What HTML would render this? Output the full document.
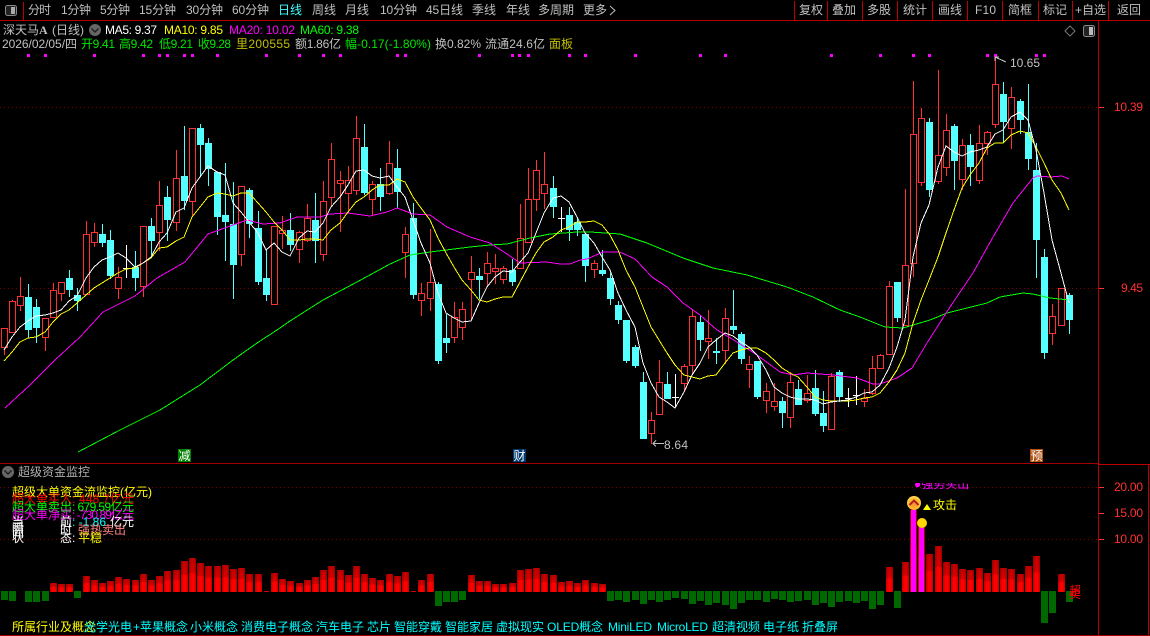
<!DOCTYPE html>
<html><head><meta charset="utf-8"><style>
html,body{margin:0;padding:0;background:#000;width:1150px;height:636px;overflow:hidden}
svg{display:block}
text{font-family:"Liberation Sans","WenQuanYi Zen Hei","Noto Sans CJK SC",sans-serif;font-size:12px;fill:#c0c0c0}
.g{fill:#00e600}.y{fill:#ffff00}.dy{fill:#c0c000}.m{fill:#ff00ff}.w{fill:#fff}.r{fill:#ff3232}.c{fill:#00ffff}
.ma{fill:none;stroke-width:1;shape-rendering:crispEdges}
</style></head><body>
<svg width="1150" height="636" viewBox="0 0 1150 636" xmlns="http://www.w3.org/2000/svg">
<defs>
<linearGradient id="rg" x1="0" x2="1" y1="0" y2="0"><stop offset="0" stop-color="#c00000"/><stop offset=".35" stop-color="#ff0000"/><stop offset=".7" stop-color="#ff0000"/><stop offset="1" stop-color="#c00000"/></linearGradient>
<linearGradient id="vg" x1="0" x2="0" y1="0" y2="1"><stop offset="0" stop-color="#000" stop-opacity=".25"/><stop offset=".45" stop-color="#000" stop-opacity=".15"/><stop offset=".46" stop-color="#000" stop-opacity="0"/><stop offset="1" stop-color="#000" stop-opacity="0"/></linearGradient>
<radialGradient id="gold" cx=".5" cy=".6" r=".6"><stop offset="0" stop-color="#ff9030"/><stop offset=".7" stop-color="#ffc030"/><stop offset="1" stop-color="#ffe060"/></radialGradient>
<clipPath id="cl"><rect x="900" y="483" width="90" height="10"/></clipPath>
<g id="bars"><rect x="50" y="583" width="7" height="9"/><rect x="58" y="584" width="7" height="8"/><rect x="66" y="584" width="7" height="8"/><rect x="83" y="576" width="7" height="16"/><rect x="91" y="580" width="7" height="12"/><rect x="99" y="583" width="7" height="9"/><rect x="107" y="581" width="7" height="11"/><rect x="115" y="577" width="7" height="15"/><rect x="123" y="579" width="7" height="13"/><rect x="132" y="580" width="7" height="12"/><rect x="140" y="574" width="7" height="18"/><rect x="148" y="580" width="7" height="12"/><rect x="156" y="576" width="7" height="16"/><rect x="164" y="571" width="7" height="21"/><rect x="173" y="570" width="7" height="22"/><rect x="181" y="561" width="7" height="31"/><rect x="189" y="558" width="7" height="34"/><rect x="197" y="563" width="7" height="29"/><rect x="205" y="566" width="7" height="26"/><rect x="214" y="566" width="7" height="26"/><rect x="222" y="565" width="7" height="27"/><rect x="230" y="569" width="7" height="23"/><rect x="238" y="568" width="7" height="24"/><rect x="246" y="574" width="7" height="18"/><rect x="255" y="574" width="7" height="18"/><rect x="264" y="591" width="5" height="1"/><rect x="271" y="573" width="7" height="19"/><rect x="279" y="579" width="7" height="13"/><rect x="287" y="581" width="7" height="11"/><rect x="296" y="583" width="7" height="9"/><rect x="304" y="580" width="7" height="12"/><rect x="312" y="577" width="7" height="15"/><rect x="320" y="570" width="7" height="22"/><rect x="328" y="566" width="7" height="26"/><rect x="337" y="570" width="7" height="22"/><rect x="345" y="575" width="7" height="17"/><rect x="353" y="566" width="7" height="26"/><rect x="361" y="574" width="7" height="18"/><rect x="369" y="578" width="7" height="14"/><rect x="377" y="580" width="7" height="12"/><rect x="386" y="574" width="7" height="18"/><rect x="394" y="576" width="7" height="16"/><rect x="402" y="572" width="7" height="20"/><rect x="411" y="591" width="5" height="1"/><rect x="418" y="580" width="7" height="12"/><rect x="427" y="574" width="7" height="18"/><rect x="468" y="575" width="7" height="17"/><rect x="476" y="581" width="7" height="11"/><rect x="484" y="581" width="7" height="11"/><rect x="492" y="584" width="7" height="8"/><rect x="500" y="584" width="7" height="8"/><rect x="509" y="583" width="7" height="9"/><rect x="517" y="570" width="7" height="22"/><rect x="525" y="569" width="7" height="23"/><rect x="533" y="568" width="7" height="24"/><rect x="541" y="574" width="7" height="18"/><rect x="550" y="575" width="7" height="17"/><rect x="558" y="582" width="7" height="10"/><rect x="566" y="581" width="7" height="11"/><rect x="574" y="583" width="7" height="9"/><rect x="582" y="580" width="7" height="12"/><rect x="591" y="583" width="7" height="9"/><rect x="599" y="584" width="7" height="8"/><rect x="886" y="567" width="7" height="25"/><rect x="902" y="562" width="7" height="30"/><rect x="910" y="510" width="7" height="82"/><rect x="918" y="527" width="7" height="65"/><rect x="926" y="554" width="7" height="38"/><rect x="935" y="546" width="7" height="46"/><rect x="943" y="562" width="7" height="30"/><rect x="951" y="564" width="7" height="28"/><rect x="959" y="569" width="7" height="23"/><rect x="967" y="570" width="7" height="22"/><rect x="976" y="568" width="7" height="24"/><rect x="984" y="573" width="7" height="19"/><rect x="992" y="560" width="7" height="32"/><rect x="1000" y="568" width="7" height="24"/><rect x="1008" y="569" width="7" height="23"/><rect x="1017" y="574" width="7" height="18"/><rect x="1025" y="566" width="7" height="26"/><rect x="1033" y="556" width="7" height="36"/><rect x="1058" y="574" width="7" height="18"/></g>
</defs>

<!-- frame -->
<g shape-rendering="crispEdges">
<rect x="0" y="20" width="1150" height="1" fill="#c00000"/>
<rect x="23" y="2" width="1" height="18" fill="#c00000"/>
<rect x="794" y="1" width="1" height="19" fill="#c00000"/><rect x="827" y="1" width="1" height="19" fill="#c00000"/><rect x="862" y="1" width="1" height="19" fill="#c00000"/><rect x="897" y="1" width="1" height="19" fill="#c00000"/><rect x="932" y="1" width="1" height="19" fill="#c00000"/><rect x="967" y="1" width="1" height="19" fill="#c00000"/><rect x="1002" y="1" width="1" height="19" fill="#c00000"/><rect x="1038" y="1" width="1" height="19" fill="#c00000"/><rect x="1072" y="1" width="1" height="19" fill="#c00000"/><rect x="1108" y="1" width="1" height="19" fill="#c00000"/>
<rect x="1098" y="20" width="1" height="616" fill="#c00000"/>
<rect x="0" y="463" width="1098" height="1" fill="#a00000"/>
<rect x="1098" y="464" width="52" height="1" fill="#c00000"/>
<rect x="1148" y="464" width="1" height="172" fill="#c00000"/>
<rect x="0" y="635" width="1150" height="1" fill="#a00000"/>
<!-- dotted grid -->
<g stroke="#800000" stroke-dasharray="1 3"><path d="M0 107.5H1098M0 288.5H1098M0 487.5H1098M0 539.5H1098"/></g>
<!-- ticks -->
<g fill="#ff3232"><rect x="1099" y="107" width="5" height="1"/><rect x="1099" y="288" width="5" height="1"/><rect x="1099" y="487" width="5" height="1"/><rect x="1099" y="513" width="5" height="1"/><rect x="1099" y="539" width="5" height="1"/></g>
</g>

<!-- toolbar -->
<rect x="5.5" y="5.5" width="11" height="10" rx="2" fill="#222" stroke="#888"/><rect x="11" y="7" width="4" height="7" fill="#aaa"/>
<text x="28" y="14" textLength="23">分时</text>
<text x="61" y="14" textLength="30">1分钟</text>
<text x="100" y="14" textLength="30">5分钟</text>
<text x="139" y="14" textLength="37">15分钟</text>
<text x="186" y="14" textLength="37">30分钟</text>
<text x="232" y="14" textLength="37">60分钟</text>
<text x="278" y="14" class="c" style="fill:#40ffff">日线</text>
<text x="312" y="14">周线</text>
<text x="345" y="14">月线</text>
<text x="380" y="14" textLength="37">10分钟</text>
<text x="426" y="14" textLength="37">45日线</text>
<text x="472" y="14">季线</text>
<text x="506" y="14">年线</text>
<text x="538" y="14">多周期</text>
<text x="583" y="14">更多</text>
<path d="M610 6l5 4.5-5 4.5" fill="none" stroke="#c0c0c0"/>
<text x="799" y="14">复权</text><text x="832" y="14">叠加</text><text x="867" y="14">多股</text><text x="903" y="14">统计</text><text x="938" y="14">画线</text>
<text x="975" y="14" textLength="21">F10</text>
<text x="1008" y="14">简框</text><text x="1043" y="14">标记</text>
<text x="1075" y="14" textLength="31">+自选</text>
<text x="1117" y="14">返回</text>

<!-- info rows -->
<text x="3" y="34">深天马</text><text x="39" y="34" style="font-family:'Liberation Serif',serif;font-weight:bold">A</text>
<text x="52" y="34" textLength="32">(日线)</text>
<circle cx="95" cy="30" r="6" fill="#666"/><path d="M91.5 28.5l3.5 3.5 3.5-3.5" fill="none" stroke="#222" stroke-width="1.5"/>
<text x="105" y="34" class="w" textLength="52">MA5: 9.37</text>
<text x="164" y="34" class="y" textLength="59">MA10: 9.85</text>
<text x="229" y="34" class="m" textLength="66">MA20: 10.02</text>
<text x="300" y="34" style="fill:#00ff00" textLength="59">MA60: 9.38</text>
<text x="2" y="48" textLength="75">2026/02/05/四</text>
<text x="81" y="48" class="g" textLength="34">开9.41</text>
<text x="119" y="48" class="g" textLength="34">高9.42</text>
<text x="159" y="48" class="g" textLength="34">低9.21</text>
<text x="198" y="48" class="g" textLength="33">收9.28</text>
<text x="236" y="48" class="dy" textLength="54">里200555</text>
<text x="295" y="48" textLength="46">额1.86亿</text>
<text x="345" y="48" class="g" textLength="86">幅-0.17(-1.80%)</text>
<text x="435" y="48" textLength="46">换0.82%</text>
<text x="485" y="48" textLength="60">流通24.6亿</text>
<text x="549" y="48" class="dy">面板</text>
<path d="M1070 26l5 5-5 5-5-5z" fill="none" stroke="#777"/>
<rect x="1083.5" y="25.5" width="11" height="11" rx="2" fill="#222" stroke="#888"/><rect x="1089" y="27" width="4" height="8" fill="#bbb"/>

<!-- signal dots -->
<g fill="#ff00ff" shape-rendering="crispEdges"><rect x="27" y="54" width="3" height="3"/><rect x="44" y="54" width="3" height="3"/><rect x="93" y="54" width="3" height="3"/><rect x="142" y="54" width="3" height="3"/><rect x="158" y="54" width="3" height="3"/><rect x="166" y="54" width="3" height="3"/><rect x="183" y="54" width="3" height="3"/><rect x="191" y="54" width="3" height="3"/><rect x="216" y="54" width="3" height="3"/><rect x="265" y="54" width="3" height="3"/><rect x="298" y="54" width="3" height="3"/><rect x="322" y="54" width="3" height="3"/><rect x="339" y="54" width="3" height="3"/><rect x="396" y="54" width="3" height="3"/><rect x="404" y="54" width="3" height="3"/><rect x="478" y="54" width="3" height="3"/><rect x="511" y="54" width="3" height="3"/><rect x="518" y="54" width="3" height="3"/><rect x="527" y="54" width="3" height="3"/><rect x="568" y="54" width="3" height="3"/><rect x="584" y="54" width="3" height="3"/><rect x="634" y="54" width="3" height="3"/><rect x="699" y="54" width="3" height="3"/><rect x="724" y="54" width="3" height="3"/><rect x="830" y="54" width="3" height="3"/><rect x="879" y="54" width="3" height="3"/><rect x="912" y="54" width="3" height="3"/><rect x="928" y="54" width="3" height="3"/><rect x="986" y="54" width="3" height="3"/><rect x="994" y="54" width="3" height="3"/><rect x="1035" y="54" width="3" height="3"/><rect x="1043" y="54" width="3" height="3"/></g>

<!-- candles -->
<g shape-rendering="crispEdges">
<path fill="none" stroke="#ff3232" d="M4.5 328V355M12.5 300V333M20.5 277V311M45.5 318V351M53.5 283V317M61.5 282V301M86.5 221V294M94.5 223V247M118.5 267V299M143.5 226V297M159.5 181V251M176.5 150V231M192.5 128V217M241.5 186V266M274.5 226V304M282.5 216V249M299.5 231V263M307.5 204V242M323.5 181V261M331.5 143V207M340.5 171V232M348.5 166V213M356.5 116V195M372.5 181V216M389.5 141V195M405.5 227V278M421.5 283V316M430.5 229V311M454.5 302V343M462.5 302V340M471.5 256V320M487.5 252V287M495.5 254V284M503.5 266V284M520.5 204V268M528.5 168V243M536.5 160V211M544.5 152V209M594.5 260V278M651.5 412V444M659.5 360V414M684.5 364V392M692.5 310V373M708.5 310V359M725.5 308V364M749.5 356V388M766.5 383V413M774.5 383V411M790.5 372V428M807.5 375V403M831.5 373V429M864.5 389V407M872.5 356V395M880.5 354V368M889.5 281V354M905.5 189V325M913.5 81V277M921.5 108V186M938.5 70V184M946.5 114V176M962.5 139V190M979.5 125V184M987.5 131V155M995.5 57V128M1011.5 87V149M1052.5 304V345M1061.5 288V325"/>
<path fill="#000" stroke="#ff3232" d="M1.5 328.5h6v19h-6zM9.5 301.5h6v31h-6zM17.5 296.5h6v9h-6zM42.5 318.5h6v19h-6zM50.5 290.5h6v27h-6zM58.5 282.5h6v11h-6zM83.5 234.5h6v60h-6zM91.5 232.5h6v10h-6zM115.5 277.5h6v11h-6zM140.5 226.5h6v60h-6zM156.5 205.5h6v27h-6zM173.5 178.5h6v44h-6zM189.5 128.5h6v73h-6zM238.5 186.5h6v68h-6zM271.5 226.5h6v78h-6zM279.5 230.5h6v3h-6zM296.5 232.5h6v17h-6zM304.5 218.5h6v22h-6zM320.5 201.5h6v53h-6zM328.5 159.5h6v38h-6zM337.5 180.5h6v3h-6zM345.5 180.5h6v13h-6zM353.5 138.5h6v52h-6zM369.5 184.5h6v15h-6zM386.5 163.5h6v30h-6zM402.5 234.5h6v18h-6zM418.5 293.5h6v7h-6zM427.5 282.5h6v16h-6zM451.5 317.5h6v20h-6zM459.5 309.5h6v18h-6zM468.5 272.5h6v7h-6zM484.5 263.5h6v10h-6zM492.5 268.5h6v3h-6zM500.5 268.5h6v11h-6zM517.5 238.5h6v30h-6zM525.5 199.5h6v43h-6zM533.5 170.5h6v29h-6zM541.5 184.5h6v9h-6zM591.5 263.5h6v6h-6zM648.5 420.5h6v13h-6zM656.5 382.5h6v32h-6zM681.5 366.5h6v17h-6zM689.5 316.5h6v49h-6zM705.5 338.5h6v3h-6zM722.5 318.5h6v32h-6zM746.5 364.5h6v5h-6zM763.5 391.5h6v9h-6zM771.5 401.5h6v5h-6zM787.5 382.5h6v35h-6zM804.5 393.5h6v7h-6zM828.5 376.5h6v53h-6zM861.5 398.5h6v3h-6zM869.5 368.5h6v25h-6zM877.5 355.5h6v13h-6zM886.5 286.5h6v68h-6zM902.5 265.5h6v60h-6zM910.5 134.5h6v129h-6zM918.5 118.5h6v64h-6zM935.5 155.5h6v26h-6zM943.5 130.5h6v37h-6zM959.5 145.5h6v34h-6zM976.5 143.5h6v37h-6zM984.5 132.5h6v11h-6zM992.5 84.5h6v40h-6zM1008.5 97.5h6v31h-6zM1049.5 316.5h6v17h-6zM1058.5 288.5h6v37h-6z"/>
<path fill="none" stroke="#54ffff" d="M28.5 284V338M36.5 299V343M69.5 270V297M77.5 288V311M102.5 224V247M110.5 230V279M135.5 251V291M151.5 218V255M167.5 186V241M184.5 126V210M200.5 124V177M208.5 138V186M217.5 172V235M225.5 163V261M233.5 182V299M249.5 188V238M258.5 211V285M266.5 250V301M290.5 213V251M315.5 193V263M364.5 124V195M380.5 168V211M397.5 149V208M413.5 203V299M438.5 282V364M446.5 314V353M479.5 268V299M512.5 259V286M553.5 176V218M569.5 207V241M577.5 217V236M585.5 234V282M602.5 250V276M610.5 273V305M618.5 301V324M626.5 320V363M635.5 345V368M643.5 372V439M667.5 372V399M700.5 315V351M716.5 338V364M733.5 290V334M741.5 332V364M757.5 361V399M782.5 397V428M798.5 380V405M815.5 370V416M823.5 391V432M839.5 370V402M897.5 282V322M929.5 118V197M954.5 124V190M970.5 134V186M1003.5 82V142M1020.5 99V134M1028.5 84V170M1036.5 143V278M1044.5 249V359M1069.5 293V334"/>
<path fill="#54ffff" d="M25 297h7v33h-7zM33 307h7v21h-7zM66 278h7v12h-7zM74 295h7v6h-7zM99 234h7v9h-7zM107 240h7v36h-7zM132 267h7v11h-7zM148 226h7v15h-7zM164 197h7v23h-7zM181 176h7v25h-7zM197 128h7v17h-7zM205 143h7v26h-7zM214 172h7v45h-7zM222 215h7v7h-7zM230 224h7v41h-7zM246 190h7v34h-7zM255 228h7v54h-7zM263 278h7v17h-7zM287 230h7v15h-7zM312 220h7v21h-7zM361 147h7v46h-7zM377 184h7v13h-7zM394 168h7v24h-7zM410 218h7v77h-7zM435 284h7v77h-7zM443 338h7v5h-7zM476 276h7v4h-7zM509 270h7v12h-7zM550 188h7v19h-7zM566 215h7v15h-7zM574 222h7v8h-7zM582 234h7v32h-7zM599 270h7v4h-7zM607 278h7v21h-7zM615 305h7v15h-7zM623 320h7v41h-7zM632 347h7v19h-7zM640 382h7v57h-7zM664 384h7v15h-7zM697 322h7v18h-7zM713 351h7v2h-7zM730 326h7v4h-7zM738 334h7v25h-7zM754 361h7v36h-7zM779 401h7v12h-7zM795 389h7v16h-7zM812 388h7v26h-7zM820 413h7v13h-7zM836 372h7v25h-7zM894 282h7v36h-7zM926 122h7v68h-7zM951 126h7v35h-7zM967 145h7v22h-7zM1000 94h7v28h-7zM1017 101h7v19h-7zM1025 132h7v27h-7zM1033 170h7v70h-7zM1041 257h7v96h-7zM1066 295h7v25h-7z"/>
<path fill="none" stroke="#fff" d="M126.5 245V278M123 268.5h7M561.5 207V232M558 218.5h7M675.5 374V407M672 397.5h7M848.5 388V407M845 398.5h7M856.5 376V405M853 395.5h7"/>
</g>

<!-- MA lines -->
<polyline class="ma" stroke="#00ff00" points="78,452 120,430 160,410 200,385 233,360 257,343 277,330 290,321 323,300 357,282 390,264 410,255 430,252 470,247 490,245 507,244 530,238 550,234 577,232 590,232 620,234 647,243 683,258 713,268 747,275 787,287 813,297 840,310 860,317 885,327 903,328 930,320 947,313 987,303 1000,297 1023,293 1033,294 1050,298 1069,300"/>
<polyline class="ma" stroke="#ff00ff" points="5,408 30,385 55,360 80,337 103,312 135,296 157,278 185,262 208,234 233,225 247,220 263,224 280,223 297,217 320,217 330,214 348,213 370,216 387,212 397,208 413,214 430,215 447,227 470,237 490,243 507,254 520,263 547,262 560,264 570,264 580,260 587,259 603,252 620,252 635,259 652,277 667,287 683,303 700,315 717,330 737,342 757,355 780,372 793,375 807,373 833,375 857,378 873,384 880,384 897,378 912,368 927,343 950,307 973,273 993,237 1013,203 1033,178 1037,176 1050,177 1062,176 1069,179"/>
<polyline class="ma" stroke="#ffff00" points="4,361 12,352 20,342 28,338 36,337 45,332 53,322 61,314 69,310 77,303 86,295 94,288 102,283 110,278 118,273 126,269 135,268 143,263 151,258 159,248 167,247 176,241 184,237 192,217 200,207 208,197 217,193 225,194 233,196 241,193 249,193 258,203 266,212 274,222 282,230 290,240 299,240 307,239 315,239 323,240 331,230 340,223 348,212 356,202 364,197 372,190 380,185 389,185 397,179 405,182 413,197 421,208 430,220 438,238 446,253 454,267 462,280 471,290 479,300 487,302 495,299 503,297 512,297 520,282 528,267 536,253 544,242 553,237 561,230 569,227 577,222 585,222 594,221 602,225 610,235 618,250 626,270 635,287 643,307 651,327 659,340 667,353 675,365 684,375 692,377 700,379 708,376 716,375 725,363 733,353 741,350 749,348 757,348 766,353 774,360 782,368 790,373 798,377 807,387 815,397 823,400 831,401 839,401 848,401 856,400 864,398 872,397 880,393 889,382 897,370 905,353 913,323 921,300 929,280 938,257 946,233 954,210 962,188 970,175 979,163 987,148 995,143 1003,143 1011,135 1020,131 1028,133 1036,147 1044,163 1052,180 1061,193 1069,210"/>
<polyline class="ma" stroke="#ffffff" points="4,350 12,337 20,327 28,321 36,316 45,315 53,313 61,310 69,301 77,296 86,278 94,267 102,260 110,257 118,253 126,258 135,267 143,263 151,257 159,242 167,233 176,212 184,208 192,188 200,177 208,166 217,172 225,175 233,203 241,212 249,222 258,233 266,250 274,243 282,252 290,256 299,238 307,231 315,232 323,223 331,207 340,197 348,185 356,171 364,170 372,176 380,178 389,176 397,187 405,197 413,220 421,243 430,263 438,293 446,313 454,318 462,322 471,321 479,303 487,287 495,277 503,271 512,272 520,262 528,253 536,233 544,213 553,198 561,196 569,202 577,217 585,233 594,243 602,257 610,270 618,293 626,310 635,327 643,363 651,383 659,397 667,402 675,408 684,392 692,375 700,363 708,347 716,340 725,333 733,336 741,342 749,347 757,355 766,370 774,387 782,393 790,397 798,399 807,399 815,400 823,404 831,402 839,401 848,400 856,397 864,393 872,392 880,385 889,368 897,347 905,320 913,257 921,223 929,205 938,167 946,146 954,152 962,156 970,152 979,150 987,147 995,134 1003,130 1011,117 1020,112 1028,120 1036,150 1044,193 1052,240 1061,273 1069,303"/>

<!-- hi/lo -->
<path d="M653 443.5h11M656 440.5l-3 3 3 3" fill="none" stroke="#c0c0c0" shape-rendering="crispEdges"/>
<text x="664" y="449" textLength="24">8.64</text>
<path d="M995 57l11 5M995 57v4M995 57h4" fill="none" stroke="#c0c0c0" shape-rendering="crispEdges"/>
<text x="1010" y="67" textLength="30">10.65</text>

<!-- axis labels -->
<text x="1114" y="111" class="r" textLength="29">10.39</text>
<text x="1121" y="292" class="r" textLength="22">9.45</text>
<text x="1114" y="491" class="r" textLength="29">20.00</text>
<text x="1114" y="517" class="r" textLength="29">15.00</text>
<text x="1114" y="543" class="r" textLength="29">10.00</text>

<!-- tags -->
<rect x="178" y="449" width="13" height="13" fill="#008000"/><text x="178.5" y="460" class="w">减</text>
<rect x="513" y="449" width="13" height="13" fill="#003a70"/><text x="513.5" y="460" class="w">财</text>
<rect x="1030" y="449" width="13" height="13" fill="#b05010"/><text x="1030.5" y="460" class="w">预</text>

<!-- panel header -->
<circle cx="8" cy="472" r="6" fill="#666"/><path d="M4.5 470.5l3.5 3.5 3.5-3.5" fill="none" stroke="#222" stroke-width="1.5"/>
<text x="18" y="476" style="fill:#b0b0b0">超级资金监控</text>

<!-- volume bars -->
<g shape-rendering="crispEdges">
<g fill="#006800"><rect x="1" y="591" width="7" height="9"/><rect x="9" y="591" width="7" height="10"/><rect x="25" y="591" width="7" height="11"/><rect x="33" y="591" width="7" height="11"/><rect x="42" y="591" width="7" height="10"/><rect x="74" y="591" width="7" height="7"/><rect x="435" y="591" width="7" height="15"/><rect x="443" y="591" width="7" height="11"/><rect x="451" y="591" width="7" height="11"/><rect x="459" y="591" width="7" height="9"/><rect x="607" y="591" width="7" height="10"/><rect x="615" y="591" width="7" height="9"/><rect x="623" y="591" width="7" height="11"/><rect x="632" y="591" width="7" height="9"/><rect x="640" y="591" width="7" height="13"/><rect x="648" y="591" width="7" height="9"/><rect x="656" y="591" width="7" height="11"/><rect x="664" y="591" width="7" height="9"/><rect x="672" y="591" width="7" height="7"/><rect x="681" y="591" width="7" height="8"/><rect x="689" y="591" width="7" height="13"/><rect x="697" y="591" width="7" height="10"/><rect x="705" y="591" width="7" height="14"/><rect x="713" y="591" width="7" height="12"/><rect x="722" y="591" width="7" height="14"/><rect x="730" y="591" width="7" height="18"/><rect x="738" y="591" width="7" height="12"/><rect x="746" y="591" width="7" height="9"/><rect x="754" y="591" width="7" height="9"/><rect x="763" y="591" width="7" height="11"/><rect x="771" y="591" width="7" height="8"/><rect x="779" y="591" width="7" height="9"/><rect x="787" y="591" width="7" height="11"/><rect x="795" y="591" width="7" height="10"/><rect x="804" y="591" width="7" height="9"/><rect x="812" y="591" width="7" height="14"/><rect x="820" y="591" width="7" height="12"/><rect x="828" y="591" width="7" height="16"/><rect x="836" y="591" width="7" height="11"/><rect x="845" y="591" width="7" height="10"/><rect x="853" y="591" width="7" height="12"/><rect x="861" y="591" width="7" height="10"/><rect x="869" y="591" width="7" height="18"/><rect x="877" y="591" width="7" height="14"/><rect x="894" y="591" width="7" height="17"/><rect x="1041" y="591" width="7" height="32"/><rect x="1049" y="591" width="7" height="22"/><rect x="1066" y="591" width="7" height="11"/></g>
<use href="#bars" fill="url(#rg)"/>
<use href="#bars" fill="url(#vg)"/>
<rect x="911" y="510" width="5" height="82" fill="#ff00ff"/><rect x="919" y="527" width="5" height="65" fill="#ff00ff"/>
</g>

<!-- badges -->
<circle cx="914" cy="503" r="7" fill="url(#gold)"/><path d="M909.5 505l4.5-4.5 4.5 4.5" fill="none" stroke="#b02020" stroke-width="2"/>
<circle cx="922" cy="523" r="5" fill="#ffd700"/>
<path d="M923 510l4-6 4 6z" fill="#ffff00"/>
<text x="933" y="509" class="y">攻击</text>
<g clip-path="url(#cl)"><text x="914" y="488" class="m">●强势买出</text></g>

<text x="1069" y="595" style="fill:#ff0000">超</text><text x="1069" y="598" style="fill:#ff0000">卖</text>

<!-- overlay labels -->
<text x="12" y="496" class="y" textLength="140">超级大单资金流监控(亿元)</text>
<text x="12" y="503" style="fill:#ff0000">超大单买入</text><text x="72" y="503" style="fill:#ff0000" textLength="62">: 448.7亿元</text>
<text x="12" y="511" style="fill:#00ff00">超大单卖出</text><text x="72" y="511" style="fill:#00ff00" textLength="62">: 679.59亿元</text>
<text x="12" y="519" class="m">超大单净买</text><text x="72" y="519" class="m" textLength="62">: -730.89亿元</text>
<text x="12" y="526" class="w">当</text><text x="60" y="526" class="w">前</text><text x="72" y="526" class="c">: -1.86</text><text x="110" y="526" class="w">亿元</text>
<text x="12" y="532" class="w">瞬</text><text x="60" y="534" class="w">时</text><text x="78" y="534" style="fill:#ff8080">强热卖出</text>
<text x="12" y="537" class="w">间</text><text x="12" y="542" class="w">状</text><text x="60" y="542" class="w">态</text><text x="72" y="542" class="w">:</text><text x="78" y="542" class="y">平稳</text>

<!-- concept row -->
<text x="12" y="631" class="y">所属行业及概念</text>
<text x="84" y="631" class="c">光学光电</text><text x="133" y="631" class="c">+苹果概念</text><text x="190" y="631" class="c">小米概念</text><text x="241" y="631" class="c">消费电子概念</text><text x="316" y="631" class="c">汽车电子</text><text x="367" y="631" class="c">芯片</text><text x="394" y="631" class="c">智能穿戴</text><text x="445" y="631" class="c">智能家居</text><text x="496" y="631" class="c">虚拟现实</text><text x="547" y="631" class="c" textLength="56">OLED概念</text><text x="608" y="631" class="c" textLength="44">MiniLED</text><text x="657" y="631" class="c" textLength="51">MicroLED</text><text x="712" y="631" class="c">超清视频</text><text x="763" y="631" class="c">电子纸</text><text x="802" y="631" class="c">折叠屏</text>
</svg>
</body></html>
